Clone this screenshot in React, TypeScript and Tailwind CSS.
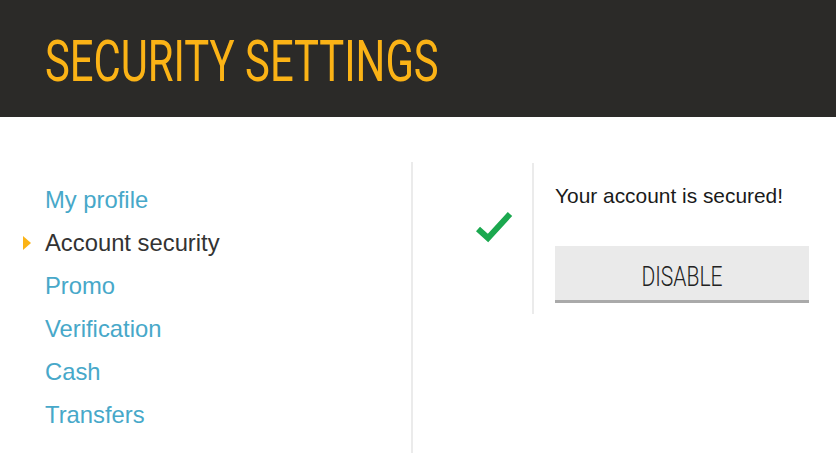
import React from "react";

const items = ["My profile", "Account security", "Promo", "Verification", "Cash", "Transfers"];

export default function App() {
  return (
    <div className="w-[836px] h-[467px] bg-white overflow-hidden" style={{ fontFamily: '"Liberation Sans", Arial, sans-serif' }}>
      <header className="h-[117px] bg-[#2b2a28] flex items-center pl-[45px]">
        <h1
          className="text-[57px] leading-none text-[#fbb316] origin-left scale-x-[0.733] whitespace-nowrap mt-[5px]"
          style={{ fontFamily: 'Roboto, "Liberation Sans", sans-serif' }}
        >
          SECURITY SETTINGS
        </h1>
      </header>
      <div className="flex items-start pt-[45px]">
        <nav className="w-[413px] h-[291px] border-r-2 border-[#ebebeb] pt-[16px]">
          <ul>
            {items.map((t) => (
              <li key={t} className="relative h-[43px] leading-[43px] pl-[45px] text-[23.8px]">
                {t === "Account security" && (
                  <span className="absolute left-[23px] top-[15px] w-0 h-0 border-y-[7px] border-y-transparent border-l-[8px] border-l-[#fbb316]" />
                )}
                <span className={t === "Account security" ? "text-[#333333]" : "text-[#47a8c9]"}>{t}</span>
              </li>
            ))}
          </ul>
        </nav>
        <div className="w-[121px] h-[151px] mt-[1px] border-r-2 border-[#ebebeb] flex justify-end pr-[19px] pt-[48px]">
          <svg width="37" height="32" viewBox="0 0 37 32">
            <path d="M2 18 L12 27 L34 3" fill="none" stroke="#1ba84f" strokeWidth="6" strokeLinejoin="miter" strokeLinecap="butt" />
          </svg>
        </div>
        <div className="pl-[21px] pt-[22px]">
          <p className="text-[20.9px] leading-[24px] text-[#1a1a1a]">Your account is secured!</p>
          <button className="mt-[38px] w-[254px] h-[57px] bg-[#eaeaea] border-b-[3px] border-[#aaaaaa] flex items-center justify-center pt-[8px]">
            <span
              className="text-[27px] leading-none font-light text-[#222] scale-x-[0.78] inline-block"
              style={{ fontFamily: 'Roboto, "Liberation Sans", sans-serif' }}
            >
              DISABLE
            </span>
          </button>
        </div>
      </div>
    </div>
  );
}
